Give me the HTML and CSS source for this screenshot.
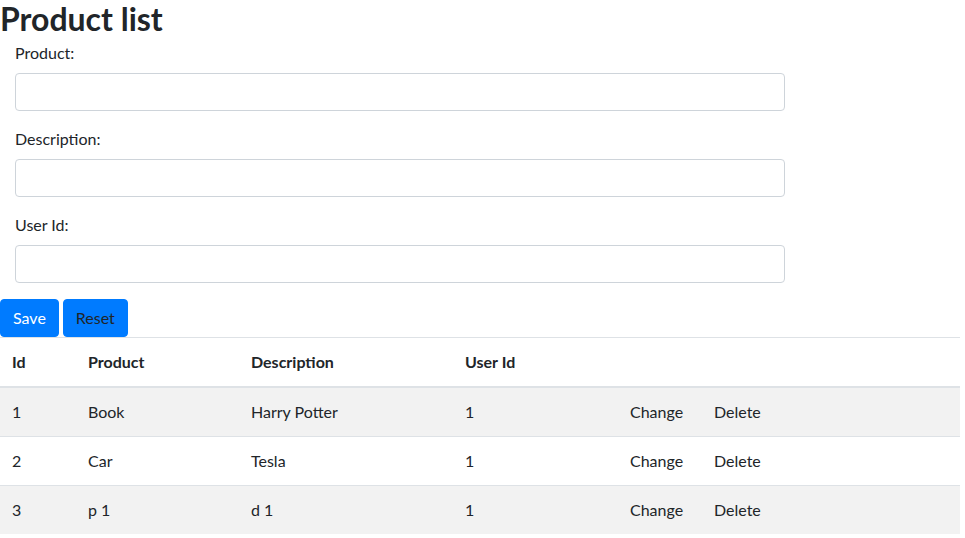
FILE: index.html
```html
<!DOCTYPE html>
<html>
<head>
<meta charset="utf-8">
<link rel="stylesheet" href="styles.css">
</head>
<body>
<h1 class="title">Product list</h1>
<form class="form">
  <div class="group">
    <label class="label">Product:</label>
    <input class="input" type="text">
  </div>
  <div class="group">
    <label class="label">Description:</label>
    <input class="input" type="text">
  </div>
  <div class="group">
    <label class="label">User Id:</label>
    <input class="input" type="text">
  </div>
</form>
<div class="buttons">
  <button class="btn btn-save">Save</button>
  <button class="btn btn-reset">Reset</button>
</div>
<table class="table">
  <colgroup>
    <col class="c-id"><col class="c-prod"><col class="c-desc"><col class="c-user"><col class="c-change"><col class="c-del">
  </colgroup>
  <thead>
    <tr><th>Id</th><th>Product</th><th>Description</th><th>User Id</th><th></th><th></th></tr>
  </thead>
  <tbody>
    <tr class="odd"><td>1</td><td>Book</td><td>Harry Potter</td><td>1</td><td>Change</td><td>Delete</td></tr>
    <tr><td>2</td><td>Car</td><td>Tesla</td><td>1</td><td>Change</td><td>Delete</td></tr>
    <tr class="odd"><td>3</td><td>p 1</td><td>d 1</td><td>1</td><td>Change</td><td>Delete</td></tr>
  </tbody>
</table>
</body>
</html>
```
FILE: styles.css
```css
html, body {
  margin: 0;
  padding: 0;
  background: #fff;
}
body {
  font-family: Lato, "Open Sans", sans-serif;
  font-size: 16px;
  line-height: 1.5;
  color: #212529;
  width: 960px;
}
.title {
  margin: 0 0 3px 0;
  font-size: 32px;
  font-weight: 700;
  line-height: 38px;
}
.form {
  width: 770px;
  padding: 0 15px;
}
.group {
  margin-bottom: 16px;
  display: flex;
  flex-direction: column;
}
.label {
  display: block;
  margin-bottom: 8px;
  line-height: 24px;
}
.input {
  box-sizing: border-box;
  height: 38px;
  width: 770px;
  border: 1px solid #ced4da;
  border-radius: 4px;
  padding: 6px 12px;
  font: inherit;
  margin: 0;
}
.buttons {
  display: flex;
  gap: 4px;
}
.btn {
  font: inherit;
  height: 38px;
  padding: 6px 12px;
  border: 1px solid #007bff;
  background: #007bff;
  border-radius: 4px;
  line-height: 24px;
}
.btn-save { color: #fff; }
.btn-reset { color: #212529; }
.table {
  width: 960px;
  border-collapse: collapse;
  table-layout: fixed;
}
.c-id { width: 76px; }
.c-prod { width: 163px; }
.c-desc { width: 214px; }
.c-user { width: 165px; }
.c-change { width: 84px; }
.table th, .table td {
  text-align: left;
  padding: 12px;
  line-height: 24px;
  border-top: 1px solid #dee2e6;
  vertical-align: top;
}
.table th {
  font-weight: 700;
  border-bottom: 2px solid #dee2e6;
}
.table tr.odd td {
  background: #f2f2f2;
}
```
